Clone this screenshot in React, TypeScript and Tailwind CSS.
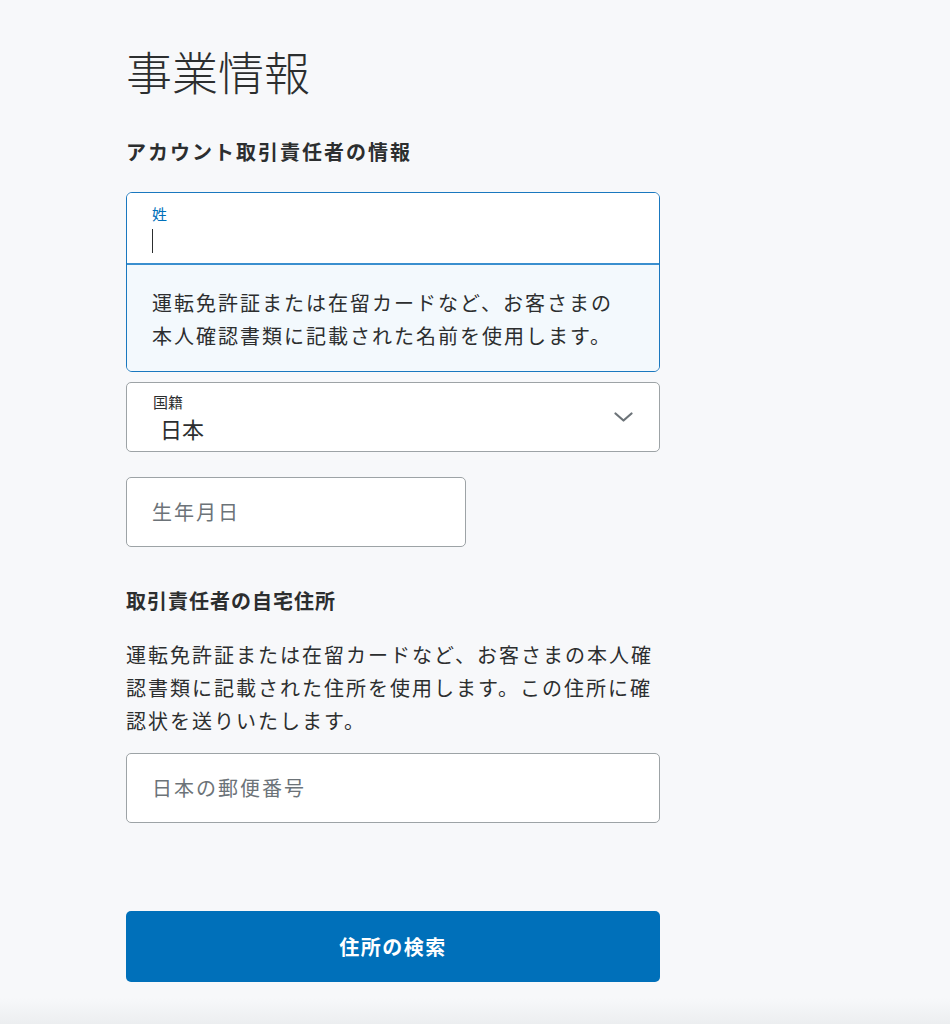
import React from "react";

const font = { fontFamily: '"Noto Sans CJK JP", "Noto Sans", sans-serif' };

function TextField({ placeholder, className = "" }: { placeholder: string; className?: string }) {
  return (
    <div
      className={
        "flex h-[70px] items-center rounded-[5px] border border-[#9da3a6] bg-white pl-[25px] " +
        className
      }
    >
      <span className="text-[20px] tracking-[2px] text-[#6c7378]">{placeholder}</span>
    </div>
  );
}

export default function App() {
  return (
    <div className="relative min-h-[1024px] w-full bg-[#f7f8fa] text-[#2c2e2f]" style={font}>
      <div className="w-[660px] pl-[126px] pt-[42px]">
        <h1 className="text-[46px] leading-[56px] font-light">事業情報</h1>

        <h2 className="mt-[40px] text-[20px] leading-[28px] font-bold tracking-[2px]">
          アカウント取引責任者の情報
        </h2>

        {/* 姓 field with hint */}
        <div className="mt-[26px] overflow-hidden rounded-[6px] border border-[#1a78bf]">
          <div className="h-[70px] bg-white pl-[25px] pt-[11px]">
            <div className="text-[15px] leading-[20px] text-[#0070ba]">姓</div>
            <div className="mt-[5px] h-[24px] w-[1px] bg-[#2c2e2f]" />
          </div>
          <div className="h-[2px] bg-[#3a8fcf]" />
          <div className="bg-[#f3f9fd] pb-[19px] pl-[25px] pt-[21px] text-[20px] leading-[33px] tracking-[2px]">
            運転免許証または在留カードなど、お客さまの
            <br />
            本人確認書類に記載された名前を使用します。
          </div>
        </div>

        {/* 国籍 select */}
        <div className="mt-[10px] flex h-[70px] items-center justify-between rounded-[5px] border border-[#9da3a6] bg-white pl-[26px] pr-[26px]">
          <div className="flex flex-col">
            <span className="text-[15px] leading-[22px]">国籍</span>
            <span className="pl-[7px] text-[22px] leading-[30px]">日本</span>
          </div>
          <svg width="19" height="10" viewBox="0 0 19 10" fill="none">
            <path d="M1.5 1.5 L9.5 8.5 L17.5 1.5" stroke="#6c7378" strokeWidth="2.2" strokeLinecap="round" strokeLinejoin="round" />
          </svg>
        </div>

        <TextField placeholder="生年月日" className="mt-[25px] w-[340px]" />

        <h2 className="mt-[40px] text-[20px] leading-[28px] font-bold tracking-[1px]">
          取引責任者の自宅住所
        </h2>

        <p className="mt-[23px] text-[20px] leading-[33px] tracking-[2px]">
          運転免許証または在留カードなど、お客さまの本人確認書類に記載された住所を使用します。この住所に確認状を送りいたします。
        </p>

        <TextField placeholder="日本の郵便番号" className="mt-[16px]" />

        <button className="mt-[88px] flex h-[71px] w-full items-center justify-center rounded-[5px] bg-[#0070ba] text-[20px] font-bold tracking-[1.5px] text-white">
          住所の検索
        </button>
      </div>
      <div className="absolute bottom-0 left-0 h-[26px] w-full bg-gradient-to-b from-[#f7f8fa] to-[#eceef0]" />
    </div>
  );
}
